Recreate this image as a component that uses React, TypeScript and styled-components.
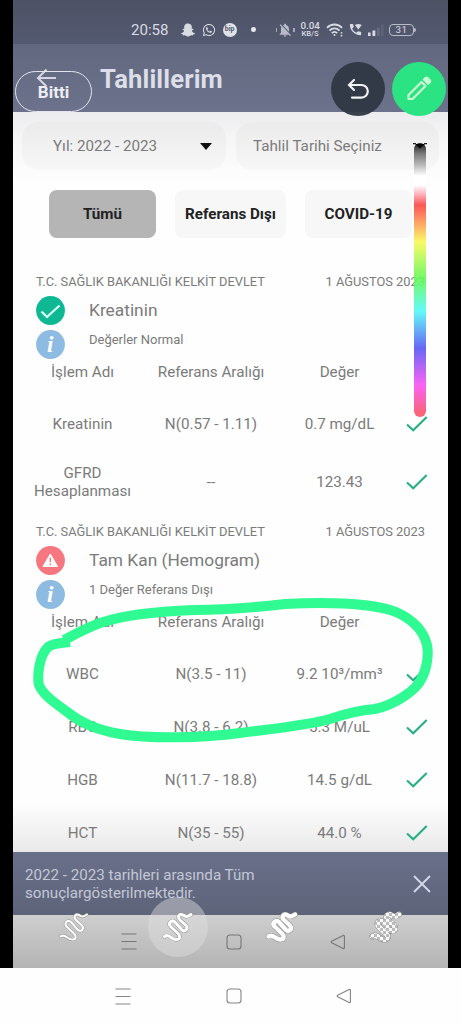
import React from "react";
import styled, { createGlobalStyle } from "styled-components";
import { FaSnapchatGhost, FaWhatsapp } from "react-icons/fa";
import { MdNotificationsOff, MdWifiCalling } from "react-icons/md";

const GlobalStyle = createGlobalStyle`
  * { box-sizing: border-box; }
  body { margin: 0; background: #fefefe; font-family: Roboto, "Liberation Sans", sans-serif; }
`;

const Page = styled.div`
  width: 461px;
  height: 1024px;
  display: flex;
  flex-direction: column;
  background: #fefefe;
  overflow: hidden;
`;

const Frame = styled.div`
  height: 968px;
  padding: 0 13px;
  background: #000;
`;

const Screen = styled.div`
  position: relative;
  width: 435px;
  height: 968px;
  display: flex;
  flex-direction: column;
  background: #fefefe;
  overflow: hidden;
  color: #7b7b7b;
`;

const StatusBar = styled.div`
  height: 44px;
  flex: none;
  display: flex;
  align-items: center;
  padding: 15px 29px 0 118px;
  background: linear-gradient(#4d5265, #535970);
  color: #d9dbe2;
  font-size: 15.1px;
`;

const StatusGroup = styled.div<{ $left: number; $gap: number }>`
  display: flex;
  align-items: center;
  gap: ${(p) => p.$gap}px;
  margin-left: ${(p) => p.$left}px;
`;

const BipBadge = styled.span`
  width: 14px;
  height: 14px;
  border-radius: 50%;
  background: #e0e2e8;
  color: #555b70;
  font-size: 7px;
  font-weight: 700;
  line-height: 13px;
  text-align: center;
`;

const Dot = styled.span`
  width: 5px;
  height: 5px;
  border-radius: 50%;
  background: #e6e8ee;
`;

const Silent = styled.span`
  display: flex;
  align-items: center;
  gap: 0;
  color: #b9bcc8;
  &::before,
  &::after {
    content: "";
    width: 1.5px;
    height: 4px;
    background: #a3a7b6;
  }
`;

const Speed = styled.div`
  display: flex;
  flex-direction: column;
  align-items: center;
  width: 22px;
  font-size: 9.8px;
  font-weight: 500;
  line-height: 8px;
  span + span { font-size: 7.6px; line-height: 7px; }
`;

const Header = styled.header`
  height: 68px;
  flex: none;
  padding: 20px 0 0 87px;
  background: linear-gradient(#62687f, #6c728b);
`;

const Title = styled.h1`
  margin: 0;
  font-size: 25.6px;
  line-height: 30px;
  font-weight: 700;
  letter-spacing: 0.15px;
  color: #dcdfe9;
`;

const Body = styled.main`
  height: 740px;
  flex: none;
  overflow: hidden;
  background: linear-gradient(#ececee 0, #f6f6f7 26px, #fefefe 70px, #fefefe 690px, #e9e9e9 740px);
`;

const Filters = styled.div`
  display: flex;
  gap: 10px;
  padding: 10px 9px 0;
`;

const Select = styled.div<{ $width: number; $left: number }>`
  width: ${(p) => p.$width}px;
  height: 48px;
  flex: none;
  display: flex;
  align-items: center;
  justify-content: space-between;
  padding: 0 14px 0 ${(p) => p.$left}px;
  border-radius: 16px;
  background: linear-gradient(#ebebec, #f7f7f7);
  font-size: 15.2px;
`;

const Caret = styled.i`
  border: 6px solid transparent;
  border-top: 7px solid #111;
  border-bottom: 0;
`;

const Tabs = styled.div`
  display: flex;
  gap: 19px;
  padding: 20px 0 0 36px;
`;

const Tab = styled.button<{ $active?: boolean; $width: number }>`
  flex: none;
  width: ${(p) => p.$width}px;
  height: 48px;
  padding: 0;
  border: 0;
  border-radius: 8px;
  background: ${(p) => (p.$active ? "#b5b5b5" : "#f7f7f7")};
  color: #222;
  font: 700 15.2px Roboto, sans-serif;
`;

const Section = styled.section`
  height: 250px;
  padding: 0 23px 0 5px;
`;

const List = styled.div`
  padding-top: 33.5px;
`;

const Origin = styled.div`
  display: flex;
  justify-content: space-between;
  height: 20px;
  padding-left: 18px;
  font-size: 12.85px;
  line-height: 20px;
  white-space: nowrap;
`;

const Summary = styled.div<{ $height: number; $size: number; $lift: number }>`
  display: flex;
  gap: 24px;
  height: ${(p) => p.$height}px;
  padding-left: 18px;
  align-items: center;
  font-size: ${(p) => p.$size}px;
  svg { flex: none; }
  span { padding-bottom: ${(p) => p.$lift}px; }
`;

const Row = styled.div<{ $height: number }>`
  display: grid;
  grid-template-columns: 129px 128px 129px 1fr;
  height: ${(p) => p.$height}px;
  align-items: center;
  text-align: center;
  font-size: 15.2px;
  line-height: 18px;
  white-space: pre-line;
  svg { display: block; margin-left: 2px; }
`;

const Notice = styled.div`
  height: 63px;
  flex: none;
  display: flex;
  align-items: center;
  justify-content: space-between;
  padding: 0 17px 0 12px;
  background: linear-gradient(#6a708a, #5d6378);
  color: #c3c7d7;
  font-size: 15.15px;
  line-height: 18px;
  white-space: pre-line;
`;

const NavBar = styled.nav<{ $inner?: boolean }>`
  display: flex;
  align-items: center;
  justify-content: space-between;
  height: ${(p) => (p.$inner ? 53 : 56)}px;
  flex: none;
  padding: ${(p) => (p.$inner ? "0 102px 0 108px" : "0 109px 0 115px")};
  background: ${(p) => (p.$inner ? "linear-gradient(#cecece, #b4b4b4)" : "#fefefe")};
  color: ${(p) => (p.$inner ? "#777" : "#858585")};
`;

const Done = styled.button`
  position: absolute;
  left: 2px;
  top: 71px;
  width: 77px;
  height: 41px;
  padding: 0;
  border: 1.3px solid #e4e6ee;
  border-radius: 21px;
  background: transparent;
  color: #eceef4;
  font: 700 17px Roboto, sans-serif;
`;

const BackArrow = styled.svg`
  position: absolute;
  left: 23px;
  top: 67px;
`;

const RoundButton = styled.button<{ $left: number; $color: string }>`
  position: absolute;
  left: ${(p) => p.$left}px;
  top: 62px;
  width: 54px;
  height: 54px;
  padding: 0;
  border: 0;
  border-radius: 50%;
  background: ${(p) => p.$color};
  display: grid;
  place-items: center;
`;

const ColorSlider = styled.div`
  position: absolute;
  left: 401px;
  top: 143px;
  width: 12px;
  height: 274px;
  border-radius: 6px;
  opacity: 0.93;
  background: linear-gradient(
    #0a0a0a 0, #6d6d6d 10px, #b5b5b5 22px, #fff 33px, #fff 42px, #ffb8c4 50px, #f94a4a 62px,
    #ff8f58 77px, #f8f95c 99px, #67f85c 136px, #58faf8 168px, #5c5cf4 205px, #fa58f4 242px, #fb5870 270px
  );
`;

const SliderCap = styled.svg`
  position: absolute;
  left: 400px;
  top: 143px;
`;

const Marker = styled.svg`
  position: absolute;
  left: 0;
  top: 590px;
  pointer-events: none;
`;

const BrushPicker = styled.div`
  position: absolute;
  left: 31px;
  top: 897px;
  display: flex;
  gap: 44px;
`;

const BrushSlot = styled.div<{ $active?: boolean }>`
  width: 60px;
  height: 60px;
  border-radius: 50%;
  display: grid;
  place-items: center;
  background: ${(p) => (p.$active ? "rgba(225,225,225,0.45)" : "transparent")};
`;

const OkDisc = () => (
  <svg width="29" height="29" viewBox="0 0 29 29">
    <circle cx="14.5" cy="14.5" r="14.4" fill="#0eb893" />
    <path d="M5.5 15.5 L11 21 L23.5 9.5" fill="none" stroke="#dcfff5" strokeWidth="2.2" />
  </svg>
);

const AlertDisc = () => (
  <svg width="29" height="29" viewBox="0 0 29 29">
    <circle cx="14.5" cy="14.5" r="14.4" fill="#f77781" />
    <path d="M14.3 8 L21.5 20.5 H7 Z" fill="#fff" stroke="#fff" strokeWidth="1" strokeLinejoin="round" />
    <path d="M14.3 11.5 V16.3 M14.3 17.6 V19.2" stroke="#f77781" strokeWidth="1.4" />
  </svg>
);

const InfoDisc = () => (
  <svg width="29" height="29" viewBox="0 0 29 29">
    <circle cx="14.5" cy="14.5" r="14.4" fill="#8dbbe2" />
    <text x="14.2" y="21.8" textAnchor="middle" fill="#fff" fontFamily="Liberation Serif, serif" fontStyle="italic" fontWeight="700" fontSize="23">
      i
    </text>
  </svg>
);

const Check = () => (
  <svg width="22" height="18" viewBox="0 0 22 18">
    <path d="M1 9.5 L7.2 15.3 L20.7 2" fill="none" stroke="#27ae85" strokeWidth="2.1" />
  </svg>
);

const WifiIcon = () => (
  <svg width="18" height="14" viewBox="0 0 18 14" fill="none" stroke="currentColor" strokeWidth="1.8">
    <path d="M1 4.8 C5 0.4 12 0.4 16 4.8 M3.5 7.6 C6.4 4.7 10.6 4.7 13.5 7.6 M5.8 10.2 C7.6 8.5 9.4 8.5 11.2 10.2" />
    <circle cx="8.5" cy="12" r="1" fill="currentColor" stroke="none" />
    <path d="M15.5 9 V10.6 M15.5 11.8 V13.4" strokeWidth="1.5" />
  </svg>
);

const SignalIcon = () => (
  <svg width="17" height="14" viewBox="0 0 17 14" fill="currentColor">
    <rect x="0" y="9.5" width="2.6" height="3.5" />
    <rect x="4.5" y="7.5" width="2.8" height="5.5" />
    <rect x="9" y="4.5" width="2.6" height="8.5" opacity="0.17" />
    <rect x="13" y="1.5" width="2.6" height="11.5" opacity="0.1" />
  </svg>
);

const Battery = styled.div`
  position: relative;
  width: 25px;
  height: 12px;
  border: 1px solid #b9bcc7;
  border-radius: 4px;
  font-size: 9.8px;
  line-height: 10px;
  text-align: center;
  letter-spacing: 0.5px;
  &::after {
    content: "";
    position: absolute;
    right: -3px;
    top: 3px;
    width: 2px;
    height: 4px;
    border-radius: 0 2px 2px 0;
    background: #b9bcc7;
  }
`;

const NavIcons = () => (
  <>
    <svg width="16" height="17" viewBox="0 0 16 17" stroke="currentColor" strokeWidth="1.1">
      <path d="M0.5 1 H15.5 M0.5 8.5 H15.5 M0.5 16 H15.5" />
    </svg>
    <svg width="16" height="16" viewBox="0 0 16 16" fill="none" stroke="currentColor" strokeWidth="1.1">
      <rect x="1" y="1" width="14" height="14" rx="3" />
    </svg>
    <svg width="16" height="16" viewBox="0 0 16 16" fill="none" stroke="currentColor" strokeWidth="1.1" strokeLinejoin="round">
      <path d="M13.2 1.4 L1.6 7.3 Q0.7 8 1.6 8.7 L13.2 14.6 Q14.4 14.9 14.4 13.7 V2.3 Q14.4 1.1 13.2 1.4 Z" />
    </svg>
  </>
);

const squiggle =
  "M1.5 23.5 C6 20 8 26.5 13 26.5 C17.5 26.5 17.5 23 15 20.5 L7.5 13.5 C4.5 10 9 6 12 9 L18.5 16.5 C21.5 19.5 26 16.5 23 12.5 L16.5 6.5 C14 3 17 0.5 20 2 C23 4.5 25 3.5 28 1.5";

const Brush = ({ weight, checker }: { weight: number; checker?: boolean }) => (
  <svg width="30" height="30" viewBox="0 -1 30 30" fill="none" strokeLinecap="round" strokeLinejoin="round" overflow="visible">
    {checker && (
      <defs>
        <pattern id="checker" width="6" height="6" patternUnits="userSpaceOnUse">
          <rect width="6" height="6" fill="#f8f8f8" />
          <rect width="3" height="3" fill="#bcbcbc" />
          <rect x="3" y="3" width="3" height="3" fill="#bcbcbc" />
        </pattern>
      </defs>
    )}
    <path d={squiggle} stroke="#8d8d8d" strokeWidth={weight + 0.9} />
    <path d={squiggle} stroke={checker ? "url(#checker)" : "#fff"} strokeWidth={weight} />
  </svg>
);

type Result = { name: string; range: string; value: string; height: number };

type Panel = { title: string; note: string; alert?: boolean; rows: Result[] };

const panels: Panel[] = [
  {
    title: "Kreatinin",
    note: "Değerler Normal",
    rows: [
      { name: "Kreatinin", range: "N(0.57 - 1.11)", value: "0.7 mg/dL", height: 53 },
      { name: "GFRD\nHesaplanması", range: "--", value: "123.43", height: 63 },
    ],
  },
  {
    title: "Tam Kan (Hemogram)",
    note: "1 Değer Referans Dışı",
    alert: true,
    rows: [
      { name: "WBC", range: "N(3.5 - 11)", value: "9.2 10³/mm³", height: 53 },
      { name: "RBC", range: "N(3.8 - 6.2)", value: "5.3 M/uL", height: 53 },
      { name: "HGB", range: "N(11.7 - 18.8)", value: "14.5 g/dL", height: 53 },
      { name: "HCT", range: "N(35 - 55)", value: "44.0 %", height: 53 },
    ],
  },
];

export default function App() {
  return (
    <Page>
      <GlobalStyle />
      <Frame>
        <Screen>
          <StatusBar>
            <span>20:58</span>
            <StatusGroup $left={12} $gap={7}>
              <FaSnapchatGhost size={14} />
              <FaWhatsapp size={14} />
              <BipBadge>bip</BipBadge>
            </StatusGroup>
            <StatusGroup $left={14} $gap={0}>
              <Dot />
            </StatusGroup>
            <StatusGroup $left={20} $gap={4.5}>
              <Silent>
                <MdNotificationsOff size={16} />
              </Silent>
              <Speed>
                <span>0.04</span>
                <span>KB/S</span>
              </Speed>
              <WifiIcon />
              <MdWifiCalling size={15} />
              <SignalIcon />
              <Battery>31</Battery>
            </StatusGroup>
          </StatusBar>
          <Header>
            <Title>Tahlillerim</Title>
          </Header>
          <Body>
            <Filters>
              <Select $width={204} $left={31}>
                Yıl: 2022 - 2023
                <Caret />
              </Select>
              <Select $width={203} $left={17}>Tahlil Tarihi Seçiniz</Select>
            </Filters>
            <Tabs>
              <Tab $active $width={107}>Tümü</Tab>
              <Tab $width={111}>Referans Dışı</Tab>
              <Tab $width={107}>COVID-19</Tab>
            </Tabs>
            <List>
              {panels.map((panel) => (
                <Section key={panel.title}>
                  <Origin>
                    <span>T.C. SAĞLIK BAKANLIĞI KELKİT DEVLET</span>
                    <span>1 AĞUSTOS 2023</span>
                  </Origin>
                  <Summary $height={37} $size={17.35} $lift={0}>
                    {panel.alert ? <AlertDisc /> : <OkDisc />}
                    <span>{panel.title}</span>
                  </Summary>
                  <Summary $height={31} $size={13} $lift={9}>
                    <InfoDisc />
                    <span>{panel.note}</span>
                  </Summary>
                  <Row $height={24}>
                    <span>İşlem Adı</span>
                    <span>Referans Aralığı</span>
                    <span>Değer</span>
                  </Row>
                  <Row $height={14} />
                  {panel.rows.map((row) => (
                    <Row key={row.name} $height={row.height}>
                      <span>{row.name}</span>
                      <span>{row.range}</span>
                      <span>{row.value}</span>
                      <Check />
                    </Row>
                  ))}
                </Section>
              ))}
            </List>
          </Body>
          <Notice>
            <span>{"2022 - 2023 tarihleri arasında Tüm\nsonuçlargösterilmektedir."}</span>
            <svg width="18" height="18" viewBox="0 0 18 18" stroke="#d5d9ea" strokeWidth="1.8">
              <path d="M1 1 L17 17 M17 1 L1 17" />
            </svg>
          </Notice>
          <NavBar $inner>
            <NavIcons />
          </NavBar>

          <BackArrow width="22" height="22" viewBox="0 0 22 22" fill="none" stroke="#d5d8e2" strokeWidth="2">
            <path d="M20 11 H2 M10.5 2.5 L2 11 L10.5 19.5" />
          </BackArrow>
          <Done>Bitti</Done>
          <RoundButton $left={317.5} $color="rgba(47,54,67,0.94)">
            <svg width="22" height="22" viewBox="0 0 22 22" fill="none" stroke="#f2f3f6" strokeWidth="2.2" strokeLinecap="round">
              <path d="M7 2 L2 7 L7 12 M2 7 H14.5 A6.3 6.3 0 0 1 14.5 19.6 H5" />
            </svg>
          </RoundButton>
          <RoundButton $left={378.5} $color="#2be383">
            <svg width="28" height="28" viewBox="0 0 28 28" fill="none" stroke="#c9fbd2" strokeWidth="2.2" strokeLinejoin="round">
              <path d="M3.5 20 L16.5 7 L20.5 11 L7.5 24 H3.5 Z" />
              <path d="M19 4.5 L20.5 3 Q21.5 2 22.5 3 L24.7 5.2 Q25.7 6.2 24.7 7.2 L23.2 8.7 Z" fill="#c9fbd2" />
            </svg>
          </RoundButton>
          <ColorSlider />
          <SliderCap width="14" height="6" viewBox="0 0 14 6">
            <path d="M0 0.6 H3 M11 0.6 H14" stroke="#222" strokeWidth="1.2" />
            <path d="M2 1 H12 L7 5.5 Z" fill="#050505" />
          </SliderCap>
          <Marker width="435" height="160" viewBox="13 590 435 160" fill="none" stroke="#30fb93" strokeWidth="10" strokeLinejoin="round">
            <path d="M70 642 C62 643 53 643 48 647 C39 656 37 676 39 685 C43 695 55 703 66 711 C82 724 98 730 120 734 C150 739 203 738 240 733 C280 728 310 725 330 719 C350 712 362 710 375 709 C390 706 410 695 419 683 C427 671 429 655 427 645 C423 629 412 619 396 612 C370 602 320 602 285 604 C250 608 222 610 195 610 C150 612 125 615 100 623 C84 629 74 635 64 640" />
          </Marker>
          <BrushPicker>
            <BrushSlot><Brush weight={2.1} /></BrushSlot>
            <BrushSlot $active><Brush weight={3} /></BrushSlot>
            <BrushSlot><Brush weight={4.4} /></BrushSlot>
            <BrushSlot><Brush weight={5.2} checker /></BrushSlot>
          </BrushPicker>
        </Screen>
      </Frame>
      <NavBar>
        <NavIcons />
      </NavBar>
    </Page>
  );
}
